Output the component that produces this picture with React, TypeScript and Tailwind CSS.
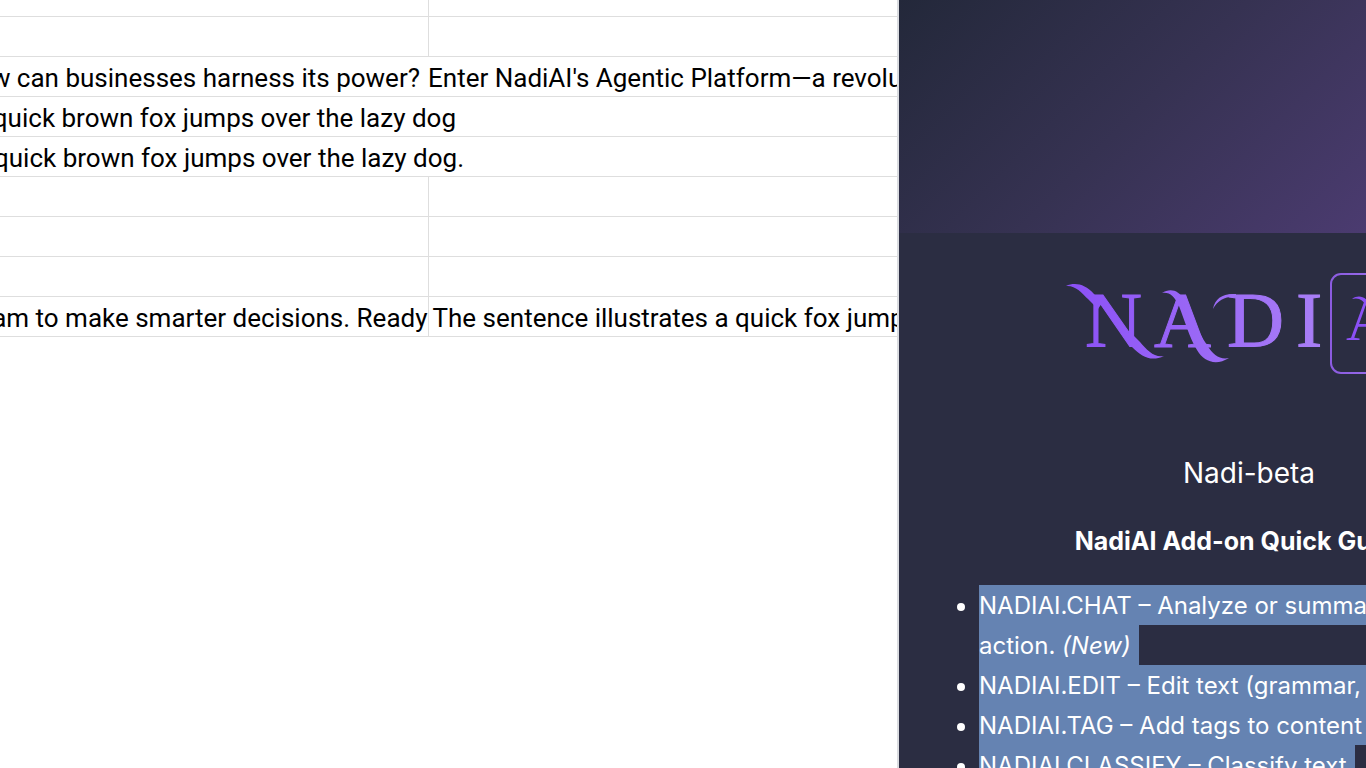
import type { ReactNode } from "react";

interface GuideItem {
  lines: { text: string; note?: string }[];
}

const guideItems: GuideItem[] = [
  {
    lines: [
      { text: "NADIAI.CHAT – Analyze or summarize" },
      { text: "action. ", note: "(New)" },
    ],
  },
  { lines: [{ text: "NADIAI.EDIT – Edit text (grammar, tone)" }] },
  { lines: [{ text: "NADIAI.TAG – Add tags to content" }] },
  { lines: [{ text: "NADIAI.CLASSIFY – Classify text" }] },
];

const EmptyRow = ({ short = false }: { short?: boolean }) => (
  <tr className={`border-b border-[#dedede] ${short ? "h-4" : "h-10"}`}>
    <td className="border-r border-[#dedede]" />
    <td />
  </tr>
);

// text of a cell whose beginning is scrolled out on the left
const ScrolledText = ({ children }: { children: ReactNode }) => (
  <div className="flex justify-end overflow-hidden">{children}</div>
);

const Sheet = () => {
  return (
    <div className="min-w-0 overflow-hidden bg-white">
      <table className="w-full table-fixed border-collapse whitespace-nowrap font-['Roboto',sans-serif] text-[26px] leading-[35px] text-black">
        <colgroup>
          <col className="w-[428px]" />
          <col />
        </colgroup>
        <tbody>
          <EmptyRow short />
          <EmptyRow />
          <tr className="h-10 border-b border-[#dedede]">
            <td className="p-0 pt-1 pr-2">
              <ScrolledText>How can businesses harness its power?</ScrolledText>
            </td>
            <td className="overflow-hidden p-0 pt-1">
              Enter NadiAI's Agentic Platform—a revolution
            </td>
          </tr>
          <tr className="h-10 border-b border-[#dedede]">
            <td colSpan={2} className="p-0 pt-1">
              <div className="w-[456px]">
                <ScrolledText>The quick brown fox jumps over the lazy dog</ScrolledText>
              </div>
            </td>
          </tr>
          <tr className="h-10 border-b border-[#dedede]">
            <td colSpan={2} className="p-0 pt-1">
              <div className="w-[464px]">
                <ScrolledText>The quick brown fox jumps over the lazy dog.</ScrolledText>
              </div>
            </td>
          </tr>
          <EmptyRow />
          <EmptyRow />
          <EmptyRow />
          <tr className="h-10 border-b border-[#dedede]">
            <td className="border-r border-[#dedede] p-0 pt-1">
              <ScrolledText>team to make smarter decisions. Ready</ScrolledText>
            </td>
            <td className="overflow-hidden p-0 pt-1 pl-1">
              The sentence illustrates a quick fox jumping
            </td>
          </tr>
        </tbody>
      </table>
    </div>
  );
};

const Logo = () => (
  <svg
    width="366"
    height="104"
    viewBox="0 0 366 104"
    role="img"
    aria-label="NADI AI"
    className="shrink-0"
  >
    <defs>
      <linearGradient id="word" gradientUnits="userSpaceOnUse" x1="0" y1="0" x2="260" y2="0">
        <stop offset="0" stopColor="#8b50f6" />
        <stop offset="1" stopColor="#a97ff6" />
      </linearGradient>
      <linearGradient id="box" gradientUnits="userSpaceOnUse" x1="264" y1="0" x2="364" y2="0">
        <stop offset="0" stopColor="#8b5be0" />
        <stop offset="1" stopColor="#a97ff6" />
      </linearGradient>
    </defs>
    <g
      fill="url(#word)"
      stroke="url(#word)"
      strokeWidth="1"
      fontFamily="'Liberation Serif', serif"
      fontSize="79"
    >
      <text x="19" y="74">N</text>
      <text x="88" y="74">A</text>
      <text x="161" y="74">D</text>
      <text x="230" y="74">I</text>
    </g>
    {/* flourishes */}
    <g fill="url(#word)">
      <path d="M0 14C9 10 19 12 28 22L36 31L32 37L22 27C15 20 9 13 0 14Z" />
      <path d="M66 62L74 70C81 78 88 86 98 84C85 90 76 85 66 75L60 68Z" />
      <path d="M96 21C104 16 113 18 118 28C126 43 132 60 141 73C147 83 154 88 163 86C150 94 138 90 131 78C123 65 119 49 113 34C108 24 104 20 96 21Z" />
      <path d="M147 37C149 26 157 21 170 22L170 25C160 24 152 28 147 37Z" />
    </g>
    <rect x="265" y="2" width="98" height="99" rx="10" fill="none" stroke="url(#box)" strokeWidth="2" />
    <g fill="#8b50f6" fontFamily="'Liberation Serif', serif" fontSize="60">
      <text x="280" y="68">A</text>
      <text x="330" y="68">I</text>
    </g>
    <path d="M286 27C293 22 301 25 305 34L301 36C298 29 294 25 286 27Z" fill="#8b50f6" />
  </svg>
);

const AddonPanel = () => {
  return (
    <aside className="min-w-0 overflow-hidden border-l-2 border-[#dadce0] bg-[#2b2d42] font-['Inter',sans-serif] text-white">
      <div className="h-[233px] bg-linear-135 from-[#23283a] via-[#363252] to-[#4b3b70]" />
      <div className="flex w-[700px] flex-col">
        <div className="flex justify-center pt-[39px]">
          <Logo />
        </div>
        <h1 className="mt-[77px] text-center text-[28px] leading-10">Nadi-beta</h1>
        <h2 className="mt-7 text-center text-[25px] leading-10 font-bold">
          NadiAI Add-on Quick Guides
        </h2>
        <ul className="mt-6 list-disc pl-20 text-2xl leading-[38px] whitespace-nowrap">
          {guideItems.map((item) => (
            <li key={item.lines[0].text}>
              {item.lines.map((line) => (
                <span
                  key={line.text}
                  className="block w-max bg-[#6583b2] pt-0.5 pr-2 whitespace-pre"
                >
                  {line.text}
                  {line.note && <em>{line.note}</em>}
                </span>
              ))}
            </li>
          ))}
        </ul>
      </div>
    </aside>
  );
};

export default function App() {
  return (
    <main className="grid h-screen grid-cols-[897fr_469fr] overflow-hidden bg-white">
      <Sheet />
      <AddonPanel />
    </main>
  );
}
